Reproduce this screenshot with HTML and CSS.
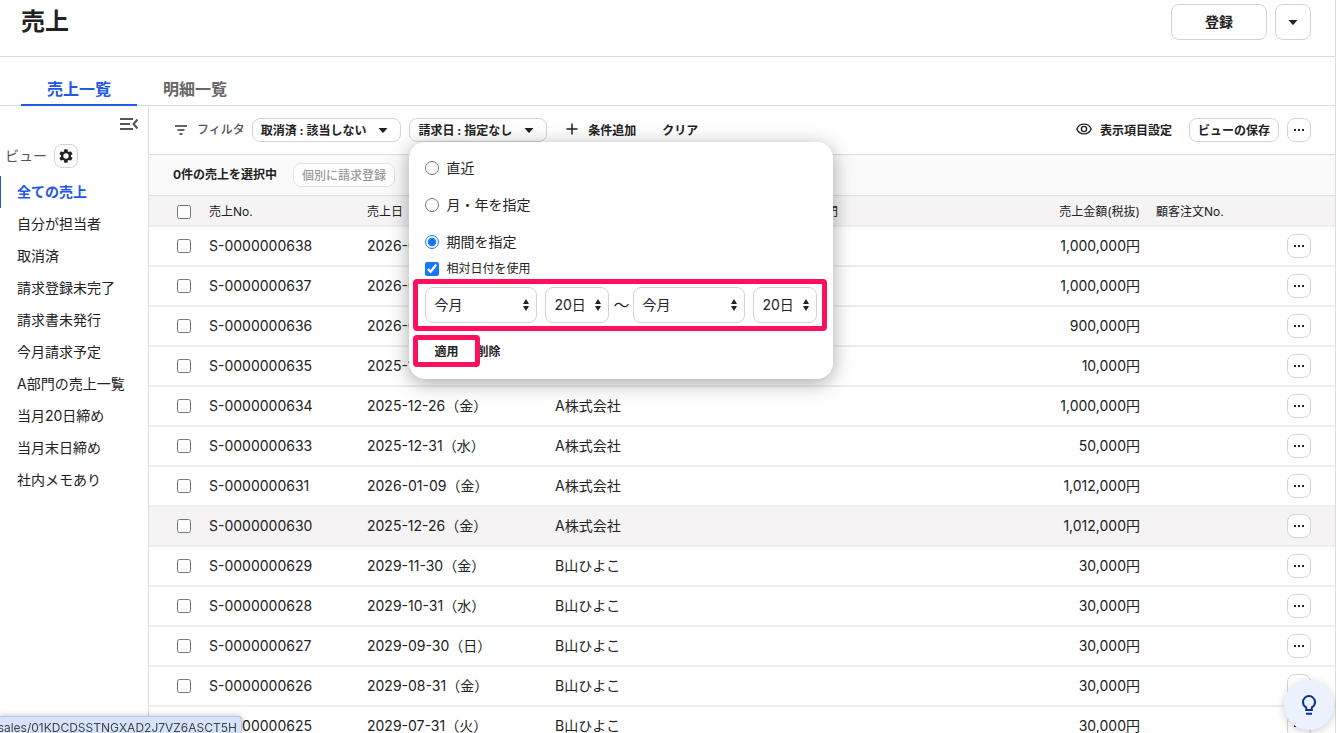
FILE: index.html
```html
<!DOCTYPE html>
<html lang="ja">
<head>
  <meta charset="UTF-8" />
  <meta name="viewport" content="width=device-width, initial-scale=1.0">
  <title>売上</title>
  <link rel="stylesheet" href="styles.css">
</head>
<body>
  <div class="app">
    <header class="header">
      <h1>売上</h1>
      <div class="header-actions">
        <button type="button" class="btn btn-large btn-register">登録</button>
        <button type="button" class="btn btn-large btn-square" aria-label="その他の登録方法">
          <svg width="18" height="18" viewBox="0 0 18 18"><path d="M4.5 7h9L9.6 11.4q-.6.6-1.2 0z" fill="currentColor"/></svg>
        </button>
      </div>
    </header>

    <nav class="tabs">
      <a href="#" class="tab active">売上一覧</a>
      <a href="#" class="tab">明細一覧</a>
    </nav>

    <div class="body">
      <aside class="sidebar">
        <div class="sidebar-top">
          <button type="button" class="btn-plain" aria-label="サイドバーを閉じる">
            <svg width="20" height="16" viewBox="0 0 20 16" fill="none" stroke="#555" stroke-width="2"><path d="M1 3h13M1 8h10M1 13h13M18.500 3.500L14.500 8l4 4.500"/></svg>
          </button>
        </div>
        <div class="view-heading">
          <span>ビュー</span>
          <button type="button" class="btn btn-icon" aria-label="ビューの設定">
            <svg width="16" height="16" viewBox="0 0 24 24"><path fill="currentColor" fill-rule="evenodd" d="M19.4 13a7.500 7.500 0 0 0 0-2l2.100-1.600c.2-.2.3-.4.1-.7l-2-3.400c-.1-.2-.4-.3-.6-.2l-2.500 1a7 7 0 0 0-1.700-1L14.400 2.400c0-.2-.2-.4-.5-.4h-4c-.2 0-.4.2-.5.4L9 5.100a8 8 0 0 0-1.700 1l-2.500-1c-.2-.1-.5 0-.6.2l-2 3.400c-.1.2-.1.5.1.7L4.500 11a7.500 7.500 0 0 0 0 2l-2.200 1.600c-.2.2-.2.4-.1.7l2 3.400c.1.2.4.3.6.2l2.500-1a7 7 0 0 0 1.700 1l.4 2.700c0 .2.2.4.5.4h4c.2 0 .4-.2.5-.4l.4-2.700a8 8 0 0 0 1.700-1l2.500 1c.2.1.5 0 .6-.2l2-3.400c.1-.2.1-.5-.1-.7zM12 16a4 4 0 1 1 0-8 4 4 0 0 1 0 8z"/></svg>
          </button>
        </div>
        <ul class="views">
          <li><a href="#" class="active">全ての売上</a></li>
          <li><a href="#">自分が担当者</a></li>
          <li><a href="#">取消済</a></li>
          <li><a href="#">請求登録未完了</a></li>
          <li><a href="#">請求書未発行</a></li>
          <li><a href="#">今月請求予定</a></li>
          <li><a href="#">A部門の売上一覧</a></li>
          <li><a href="#">当月20日締め</a></li>
          <li><a href="#">当月末日締め</a></li>
          <li><a href="#">社内メモあり</a></li>
        </ul>
      </aside>

      <main class="main">
        <div class="toolbar">
          <div class="filter-label">
            <svg width="16" height="16" viewBox="0 0 16 16" stroke="#333" stroke-width="1.500"><path d="M2 4h12M4.500 8h7M6.500 12h3"/></svg>
            <span>フィルタ</span>
          </div>
          <button type="button" class="btn chip">取消済 : 該当しない
            <svg width="18" height="18" viewBox="0 0 18 18"><path d="M4.500 7h9L9.600 11.400q-.6.6-1.200 0z" fill="currentColor"/></svg>
          </button>
          <div class="filter">
            <button type="button" class="btn chip">請求日 : 指定なし
              <svg width="18" height="18" viewBox="0 0 18 18"><path d="M4.500 7h9L9.600 11.400q-.6.6-1.200 0z" fill="currentColor"/></svg>
            </button>
            <form class="popover">
              <label class="option"><input type="radio" name="period">直近</label>
              <label class="option"><input type="radio" name="period">月・年を指定</label>
              <label class="option"><input type="radio" name="period" checked>期間を指定</label>
              <label class="option option-small"><input type="checkbox" checked>相対日付を使用</label>
              <div class="range">
                <div class="select month">
                  <select aria-label="開始月"><option>今月</option><option>先月</option><option>来月</option></select>
                  <svg width="8" height="14" viewBox="0 0 8 14"><path d="M4 1l3 5h-6zM4 13l3-5h-6z" fill="currentColor"/></svg>
                </div>
                <div class="select day">
                  <select aria-label="開始日"><option>20日</option><option>末日</option></select>
                  <svg width="8" height="14" viewBox="0 0 8 14"><path d="M4 1l3 5h-6zM4 13l3-5h-6z" fill="currentColor"/></svg>
                </div>
                <span class="tilde">〜</span>
                <div class="select month">
                  <select aria-label="終了月"><option>今月</option><option>先月</option><option>来月</option></select>
                  <svg width="8" height="14" viewBox="0 0 8 14"><path d="M4 1l3 5h-6zM4 13l3-5h-6z" fill="currentColor"/></svg>
                </div>
                <div class="select day">
                  <select aria-label="終了日"><option>20日</option><option>末日</option></select>
                  <svg width="8" height="14" viewBox="0 0 8 14"><path d="M4 1l3 5h-6zM4 13l3-5h-6z" fill="currentColor"/></svg>
                </div>
              </div>
              <div class="popover-actions">
                <button type="button" class="btn-plain apply">適用</button>
                <button type="button" class="btn-plain">削除</button>
              </div>
            </form>
          </div>
          <button type="button" class="btn-plain add">
            <svg width="16" height="16" viewBox="0 0 16 16" stroke="currentColor" stroke-width="1.500"><path d="M8 2.500v11M2.500 8h11"/></svg>条件追加
          </button>
          <button type="button" class="btn-plain">クリア</button>
          <div class="toolbar-right">
            <button type="button" class="btn-plain columns">
              <svg width="16" height="16" viewBox="0 0 16 16" fill="none" stroke="currentColor" stroke-width="1.400"><path d="M.8 8C2.200 4.800 4.900 3.100 8 3.100S13.800 4.800 15.200 8c-1.400 3.200-4.100 4.900-7.200 4.900S2.200 11.200.8 8z"/><circle cx="8" cy="8" r="2.600"/></svg>表示項目設定
            </button>
            <button type="button" class="btn chip">ビューの保存</button>
            <button type="button" class="btn btn-icon" aria-label="その他"><span class="dots"></span></button>
          </div>
        </div>

        <div class="selection">
          <span>0件の売上を選択中</span>
          <button type="button" class="btn chip" disabled>個別に請求登録</button>
        </div>

        <table class="sales">
          <thead>
            <tr>
              <th class="col-check"><input type="checkbox" aria-label="全て選択"></th>
              <th class="col-no">売上No.</th>
              <th class="col-date">売上日</th>
              <th class="col-customer">得意先</th>
              <th class="col-section">部門</th>
              <th class="col-amount">売上金額(税抜)</th>
              <th class="col-order">顧客注文No.</th>
              <th class="col-menu"></th>
            </tr>
          </thead>
          <tbody id="salesRows"></tbody>
        </table>
      </main>
    </div>
  </div>

  <div class="link-status">sales/01KDCDSSTNGXAD2J7VZ6ASCT5H</div>
  <button type="button" class="hint" aria-label="ヒント">
    <svg width="24" height="24" viewBox="0 0 24 24" fill="none" stroke="currentColor" stroke-width="2"><path d="M9.200 17v-2.500C7.200 13.400 6 11.500 6 9.100a6 6 0 0 1 12 0c0 2.400-1.200 4.300-3.200 5.400V17zM9 20.800h6"/></svg>
  </button>

  <script src="script.js"></script>
</body>
</html>
```

FILE: styles.css
```css
* {
  box-sizing: border-box;
}
body {
  margin: 0;
  background: #fff;
  color: #222;
  font-family: Inter, "Noto Sans CJK JP", sans-serif;
  font-size: 14px;
  line-height: 20px;
}
a {
  color: inherit;
  text-decoration: none;
}
button,
select {
  font-family: inherit;
  color: inherit;
}
svg {
  display: block;
  flex: none;
}
input {
  width: 14px;
  height: 14px;
  margin: 0;
  flex: none;
  accent-color: #1677ff;
}
.app {
  display: flex;
  flex-direction: column;
  height: 100vh;
  overflow: hidden;
  border-right: 1px solid #ddd;
}

/* buttons */
.btn {
  display: flex;
  align-items: center;
  justify-content: center;
  height: 24px;
  padding: 0 8px 1px;
  border: 1px solid #d3d3d3;
  border-radius: 8px;
  background: #fff;
  font-size: 12px;
  font-weight: bold;
  white-space: nowrap;
}
.btn:disabled {
  color: #999;
  border-color: #e2e2e2;
  font-weight: 500;
}
.chip {
  gap: 8px;
}
.btn-icon {
  width: 24px;
  padding: 0;
}
.btn-large {
  height: 36px;
  padding-bottom: 2px;
  font-size: 14px;
}
.btn-register {
  width: 96px;
}
.btn-square {
  width: 36px;
  padding: 0;
}
.btn-plain {
  display: flex;
  align-items: center;
  gap: 8px;
  height: 24px;
  padding: 0 0 2px;
  border: none;
  background: none;
  font-size: 12px;
  font-weight: bold;
  white-space: nowrap;
}
.dots {
  width: 2px;
  height: 2px;
  background: #222;
  box-shadow: -4px 0 #222, 4px 0 #222;
}

/* header */
.header {
  display: flex;
  flex: none;
  align-items: center;
  justify-content: space-between;
  padding: 4px 24px 16px 21px;
  border-bottom: 1px solid #ddd;
}
h1 {
  margin: 0;
  font-size: 24px;
  line-height: 36px;
}
.header-actions {
  display: flex;
  gap: 8px;
}
.tabs {
  display: flex;
  flex: none;
  align-items: flex-end;
  height: 49px;
  padding-left: 21px;
  border-bottom: 1px solid #ddd;
}
.tab {
  margin-bottom: -1px;
  padding: 0 26px 3px;
  border-bottom: 2px solid transparent;
  color: #666;
  font-size: 16px;
  font-weight: bold;
  line-height: 24px;
}
.tab.active {
  color: #2557e6;
  border-color: #2557e6;
}

/* sidebar */
.body {
  display: flex;
  flex: 1;
  min-height: 0;
}
.sidebar {
  flex: none;
  width: 149px;
  border-right: 1px solid #ddd;
}
.sidebar-top {
  display: flex;
  align-items: center;
  justify-content: flex-end;
  height: 38px;
  padding-right: 9px;
}
.view-heading {
  display: flex;
  align-items: center;
  gap: 7px;
  padding-left: 5px;
  color: #555;
}
.view-heading .btn {
  color: #222;
}
.views {
  margin: 8px 0 0;
  padding: 0;
  list-style: none;
}
.views a {
  display: block;
  padding: 6px 0 6px 16px;
  border-left: 1px solid transparent;
}
.views .active {
  border-color: #2557e6;
  color: #2557e6;
  font-weight: bold;
}

/* toolbar */
.main {
  flex: 1;
  min-width: 0;
}
.toolbar {
  display: flex;
  align-items: center;
  height: 49px;
  padding: 0 24px;
  border-bottom: 1px solid #ddd;
}
.filter-label {
  display: flex;
  align-items: center;
  gap: 8px;
  margin-right: 7px;
  color: #555;
  font-size: 12px;
  font-weight: 500;
}
.filter {
  position: relative;
  margin-left: 8px;
}
.add {
  margin: 0 26px 0 17px;
}
.toolbar-right {
  display: flex;
  gap: 8px;
  margin-left: auto;
}
.columns {
  margin-right: 9px;
}

/* date popover */
.popover {
  position: absolute;
  top: 24px;
  left: 0;
  z-index: 1;
  padding: 7px 16px 16px;
  border-radius: 16px;
  background: #fff;
  box-shadow: 0 4px 20px rgba(0, 0, 0, 0.35);
}
.option {
  display: flex;
  align-items: center;
  gap: 7px;
  height: 37px;
}
.option-small {
  height: 18px;
  font-size: 12px;
}
.range {
  display: flex;
  align-items: center;
  gap: 8px;
  position: relative;
  margin-top: 9px;
}
.range::after,
.apply::after {
  content: "";
  position: absolute;
  border: 5px solid #ff0f5c;
  border-radius: 4px;
  pointer-events: none;
}
.range::after {
  inset: -8px -10px -8px -12px;
}
.select {
  position: relative;
}
.select select {
  display: block;
  width: 100%;
  height: 36px;
  padding: 0 8px 2px;
  border: 1px solid #d3d3d3;
  border-radius: 8px;
  background: #fff;
  font-size: 14px;
  appearance: none;
}
.select svg {
  position: absolute;
  top: 11px;
  right: 7px;
  pointer-events: none;
}
.month {
  width: 112px;
}
.day {
  width: 64px;
}
.tilde {
  margin: 0 -4px;
  font-size: 16px;
}
.popover-actions {
  display: flex;
  margin-top: 16px;
}
.popover-actions .btn-plain {
  padding: 0 9px 2px;
}
.popover-actions .btn-plain + .btn-plain {
  padding-right: 0;
}
.apply {
  position: relative;
}
.apply::after {
  inset: -4px -13px -4px -12px;
}

/* list */
.selection {
  display: flex;
  align-items: center;
  gap: 16px;
  height: 41px;
  padding: 0 24px;
  border-bottom: 1px solid #ddd;
  background: #fafafa;
  font-size: 12px;
  font-weight: bold;
}
.sales {
  width: 100%;
  table-layout: fixed;
  border-spacing: 0;
}
.sales th,
.sales td {
  padding: 0 8px;
  border-bottom: 2px solid #eee;
  text-align: left;
  white-space: nowrap;
}
.sales th {
  height: 31px;
  padding-top: 2px;
  background: #f5f3f4;
  font-size: 12px;
  font-weight: normal;
}
.sales td {
  height: 40px;
}
.sales input {
  display: block;
}
.sales .col-check {
  width: 52px;
  padding-left: 28px;
}
.col-no {
  width: 158px;
}
.col-date {
  width: 188px;
}
.col-customer {
  width: 259px;
}
.col-amount {
  width: 140px;
}
.sales .col-amount {
  text-align: right;
}
.col-order {
  width: 123px;
}
.col-menu {
  width: 64px;
}
.sales .col-menu {
  padding-left: 16px;
}
.sales .hovered td {
  background: #f5f3f4;
}

.link-status {
  position: fixed;
  left: 0;
  bottom: 0;
  display: flex;
  justify-content: flex-end;
  width: 242px;
  height: 17px;
  padding-right: 4px;
  overflow: hidden;
  border: 1px solid #bcc6dc;
  border-left: none;
  border-bottom: none;
  border-radius: 0 4px 0 0;
  background: #d6e3fc;
  box-shadow: 0 0 6px rgba(0, 0, 0, 0.25);
  color: #444;
  font-size: 12px;
  line-height: 22px;
}
.hint {
  position: fixed;
  right: 2px;
  bottom: 3px;
  display: flex;
  align-items: center;
  justify-content: center;
  width: 50px;
  height: 50px;
  padding: 0;
  border: none;
  border-radius: 50%;
  background: #ebf1fe;
  box-shadow: 0 2px 8px rgba(0, 0, 0, 0.2);
  color: #13308a;
}
```

FILE: script.js
```js
const sales = [
  ['638', '2026-01-31（土）', 'A株式会社', '1,000,000'],
  ['637', '2026-01-31（土）', 'A株式会社', '1,000,000'],
  ['636', '2026-01-31（土）', 'A株式会社', '900,000'],
  ['635', '2025-12-26（金）', 'A株式会社', '10,000'],
  ['634', '2025-12-26（金）', 'A株式会社', '1,000,000'],
  ['633', '2025-12-31（水）', 'A株式会社', '50,000'],
  ['631', '2026-01-09（金）', 'A株式会社', '1,012,000'],
  ['630', '2025-12-26（金）', 'A株式会社', '1,012,000'],
  ['629', '2029-11-30（金）', 'B山ひよこ', '30,000'],
  ['628', '2029-10-31（水）', 'B山ひよこ', '30,000'],
  ['627', '2029-09-30（日）', 'B山ひよこ', '30,000'],
  ['626', '2029-08-31（金）', 'B山ひよこ', '30,000'],
  ['625', '2029-07-31（火）', 'B山ひよこ', '30,000']
];

document.getElementById('salesRows').innerHTML = sales.map(([no, date, customer, amount]) => `
  <tr class="${no === '630' ? 'hovered' : ''}">
    <td class="col-check"><input type="checkbox" aria-label="S-0000000${no}を選択"></td>
    <td>S-0000000${no}</td>
    <td>${date}</td>
    <td>${customer}</td>
    <td></td>
    <td class="col-amount">${amount}円</td>
    <td></td>
    <td class="col-menu"><button type="button" class="btn btn-icon" aria-label="メニュー"><span class="dots"></span></button></td>
  </tr>
`).join('');
```
